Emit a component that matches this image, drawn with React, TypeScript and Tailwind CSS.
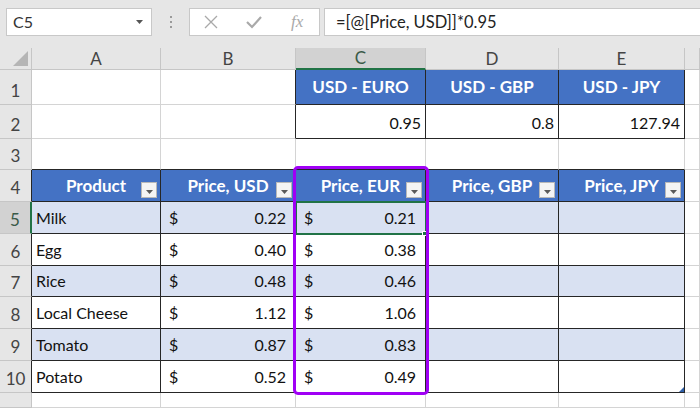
import React from "react";

const GRID = "border-r-[#d4d4d4] border-b-[#d4d4d4]";
const DARK_R = "border-r-[#262626]";
const DARK_B = "border-b-[#262626]";
const GRID_R = "border-r-[#d4d4d4]";
const GRID_B = "border-b-[#d4d4d4]";

const products = [
  ["Milk", "0.22", "0.21"],
  ["Egg", "0.40", "0.38"],
  ["Rice", "0.48", "0.46"],
  ["Local Cheese", "1.12", "1.06"],
  ["Tomato", "0.87", "0.83"],
  ["Potato", "0.52", "0.49"],
];

function Dropdown() {
  return (
    <div className="absolute right-[3px] bottom-[3px] w-[16px] h-[16px] bg-[#f4f4f4] border border-[#b8b8b8] flex items-end justify-center pb-[3px]">
      <svg width="7" height="4" viewBox="0 0 7 4">
        <path d="M0 0 L7 0 L3.5 4 Z" fill="#5a5a5a" />
      </svg>
    </div>
  );
}

function TopBar() {
  return (
    <div className="h-[48px] flex items-start pt-[8px] pl-[6px]">
      <div className="w-[146px] h-[28px] bg-white border border-[#c8c8c8] flex items-center justify-between pl-[6px] pr-[8px]">
        <span className="text-[16px] text-[#333]">C5</span>
        <svg width="7" height="4" viewBox="0 0 7 4">
          <path d="M0 0 L7 0 L3.5 4 Z" fill="#555" />
        </svg>
      </div>
      <div className="w-[37px] h-[28px] flex flex-col items-center justify-center gap-[3px]">
        <div className="w-[2px] h-[2px] bg-[#9a9a9a]" />
        <div className="w-[2px] h-[2px] bg-[#9a9a9a]" />
        <div className="w-[2px] h-[2px] bg-[#9a9a9a]" />
      </div>
      <div className="w-[131px] h-[28px] bg-white border border-[#c8c8c8] flex items-center">
        <div className="w-[42px] flex justify-center">
          <svg width="14" height="14" viewBox="0 0 14 14">
            <path d="M1 1 L13 13 M13 1 L1 13" stroke="#a9a9a9" strokeWidth="1.3" fill="none" />
          </svg>
        </div>
        <div className="w-[44px] flex justify-center">
          <svg width="16" height="14" viewBox="0 0 16 14">
            <path d="M1 7 L6 12 L15 2" stroke="#a9a9a9" strokeWidth="2.2" fill="none" />
          </svg>
        </div>
        <div className="w-[44px] flex justify-center">
          <span className="text-[17px] italic text-[#a9a9a9] font-['Liberation_Serif',serif]">fx</span>
        </div>
      </div>
      <div className="ml-[4px] flex-1 h-[28px] bg-white border border-[#c8c8c8] border-r-0 flex items-center pl-[11px]">
        <span className="text-[16.5px] text-[#222]">=[@[Price, USD]]*0.95</span>
      </div>
    </div>
  );
}

export default function App() {
  const cols = ["A", "B", "C", "D", "E", ""];
  const rowNums = ["1", "2", "3", "4", "5", "6", "7", "8", "9", "10", "11"];

  const cells: React.ReactNode[] = [];

  cells.push(
    <div key="corner" className="relative bg-[#e6e6e6] border-r border-b border-r-[#c6c6c6] border-b-[#c6c6c6]">
      <svg className="absolute right-[3px] bottom-[3px]" width="15" height="15" viewBox="0 0 15 15">
        <path d="M15 0 L15 15 L0 15 Z" fill="#b5b5b5" />
      </svg>
    </div>
  );
  cols.forEach((c, i) => {
    const sel = c === "C";
    cells.push(
      <div
        key={"ch" + i}
        className={
          sel
            ? "flex items-center justify-center bg-[#d2d2d2] border-r border-b-2 border-r-[#c6c6c6] border-b-[#217346] text-[17px] text-[#3a5a48]"
            : "flex items-center justify-center bg-[#e6e6e6] border-r border-b border-r-[#c6c6c6] border-b-[#c6c6c6] text-[17px] text-[#444]"
        }
      >
        {c}
      </div>
    );
  });

  for (let r = 1; r <= 11; r++) {
    const rhSel = r === 5;
    const inTable = r >= 4 && r <= 10;
    cells.push(
      <div
        key={"rh" + r}
        className={
          rhSel
            ? "flex items-end justify-center pb-[1px] bg-[#d2d2d2] border-r-2 border-b border-r-[#217346] border-b-[#c6c6c6] text-[17px] text-[#3a5a48]"
            : inTable
            ? "flex items-end justify-center pb-[1px] bg-[#e6e6e6] border-r border-b border-r-[#262626] border-b-[#c6c6c6] text-[17px] text-[#444]"
            : "flex items-end justify-center pb-[1px] bg-[#e6e6e6] border-r border-b border-r-[#c6c6c6] border-b-[#c6c6c6] text-[17px] text-[#444]"
        }
      >
        {r <= 10 ? rowNums[r - 1] : ""}
      </div>
    );

    for (let c = 1; c <= 6; c++) {
      const key = `c${r}-${c}`;
      let cls = "relative border-r border-b ";
      let content: React.ReactNode = null;

      if (c === 6 || r === 11) {
        cls += GRID + " bg-white";
      } else if (r === 1 || r === 2) {
        if (c <= 2) {
          cls += "bg-white " + GRID_B + " " + (c === 2 ? DARK_R : GRID_R);
        } else if (r === 1) {
          cls += "bg-[#4472c4] " + DARK_R + " " + DARK_B + " flex items-center justify-center text-white font-bold text-[17px]";
          content = ["USD - EURO", "USD - GBP", "USD - JPY"][c - 3];
        } else {
          cls += "bg-white " + DARK_R + " " + DARK_B + " flex items-end justify-end pr-[4px] pb-[3px] text-[16px] text-[#111]";
          content = ["0.95", "0.8", "127.94"][c - 3];
        }
      } else if (r === 3) {
        cls += "bg-white " + GRID_R + " " + DARK_B;
      } else if (r === 4) {
        cls += "bg-[#4472c4] " + DARK_R + " " + DARK_B + " flex items-center justify-center pt-[1px] text-white font-bold text-[17px]";
        content = (
          <>
            <span>{["Product", "Price, USD", "Price, EUR", "Price, GBP", "Price, JPY"][c - 1]}</span>
            <Dropdown />
          </>
        );
      } else {
        const band = r % 2 === 1;
        cls += (band ? "bg-[#d9e1f2] " : "bg-white ") + DARK_R + " " + DARK_B + " flex items-end pb-[3px] text-[16px] text-[#111]";
        const p = products[r - 5];
        if (c === 1) {
          cls += " pl-[4px]";
          content = p[0];
        } else if (c === 2 || c === 3) {
          cls += " justify-between pl-[8px] pr-[9px]";
          content = (
            <>
              <span>$</span>
              <span>{c === 2 ? p[1] : p[2]}</span>
            </>
          );
        }
        if (r === 10 && c === 5) {
          content = (
            <svg className="absolute right-0 bottom-0" width="5" height="5" viewBox="0 0 5 5">
              <path d="M5 0 L5 5 L0 5 Z" fill="#2e5fa8" />
            </svg>
          );
        }
      }

      cells.push(
        <div key={key} className={cls}>
          {content}
        </div>
      );
    }
  }

  return (
    <div className="w-[700px] h-[408px] overflow-hidden bg-[#e6e6e6] font-['Lato',sans-serif]">
      <TopBar />
      <div className="relative h-[360px]">
        <div className="grid grid-cols-[32px_129px_135px_130px_133px_126px_1fr] grid-rows-[22px_35px_34px_31px_32px_32px_32px_31px_32px_32px_32px_1fr] h-full bg-white">
          {cells}
        </div>
        <div className="absolute left-[295px] top-[153px] w-[132px] h-[34px] border-2 border-[#217346] pointer-events-none" />
        <div className="absolute left-[422px] top-[183px] w-[5px] h-[5px] bg-[#217346] border border-white" />
        <div className="absolute left-[293px] top-[118px] w-[136px] h-[229px] border-[3px] border-[#a000f5] rounded-[5px] pointer-events-none" />
      </div>
    </div>
  );
}
